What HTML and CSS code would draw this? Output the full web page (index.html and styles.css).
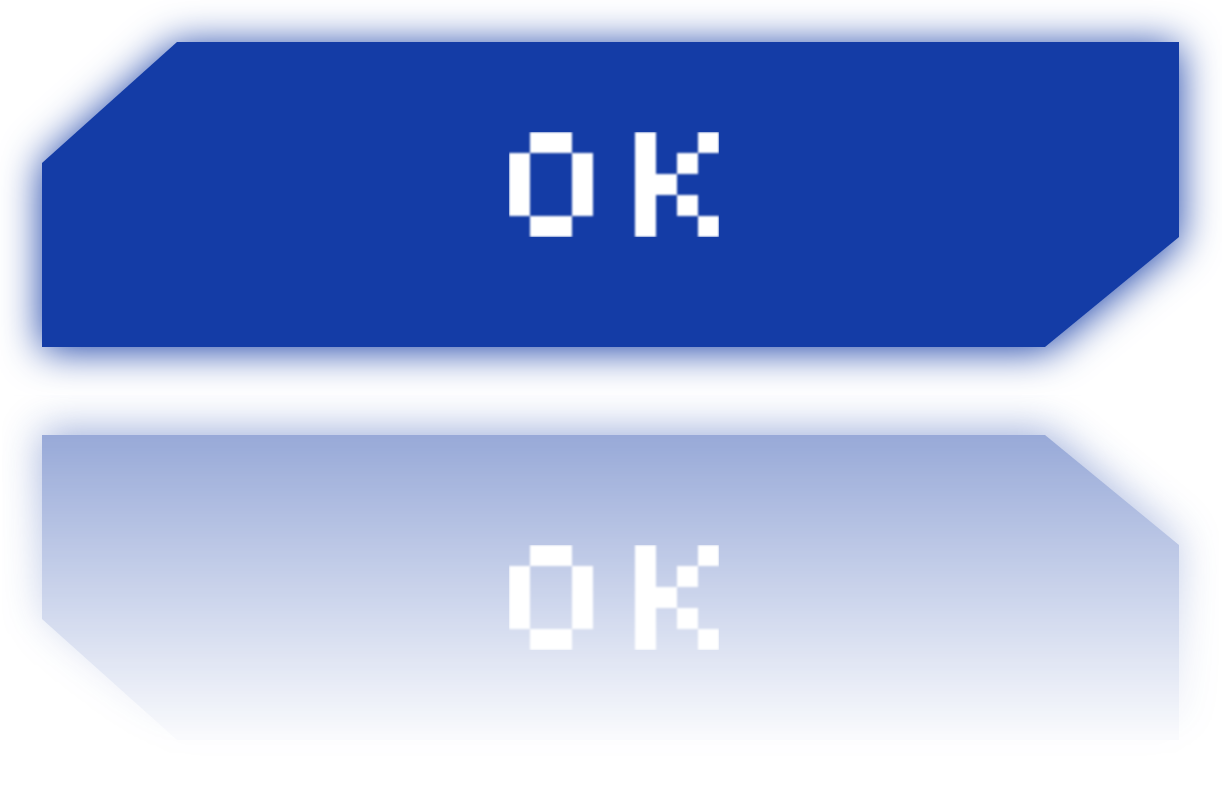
FILE: index.html
```html
<!DOCTYPE html>
<html lang="en">
<head>
<meta charset="utf-8">
<title>OK</title>
<link rel="stylesheet" href="styles.css">
</head>
<body>
<main class="stage">
  <div class="btn-wrap">
    <button class="btn" type="button">
      <svg class="label" width="250" height="190" viewBox="-20 -45 250 190">
        <defs>
          <filter id="pixel" filterUnits="userSpaceOnUse" primitiveUnits="userSpaceOnUse" x="0" y="0" width="210" height="105" color-interpolation-filters="sRGB">
            <feFlood x="10" y="10" width="1" height="1" flood-color="#fff" result="dot"/>
            <feOffset in="dot" x="0" y="0" width="21" height="21" result="cell"/>
            <feTile in="cell" x="0" y="0" width="210" height="105" result="grid"/>
            <feComposite in="SourceGraphic" in2="grid" operator="in" result="sample"/>
            <feMorphology in="sample" operator="dilate" radius="10" result="blocks"/>
            <feGaussianBlur in="blocks" stdDeviation="1.1"/>
          </filter>
        </defs>
        <g class="glyphs" filter="url(#pixel)">
          <text x="-4" y="105" textLength="92" lengthAdjust="spacingAndGlyphs">O</text><text x="118" y="105" textLength="92" lengthAdjust="spacingAndGlyphs">K</text>
        </g>
      </svg>
    </button>
  </div>
  <div class="reflection" aria-hidden="true">
    <div class="btn-wrap">
      <div class="btn">
        <svg class="label" width="250" height="190" viewBox="-20 -45 250 190">
          <g class="glyphs" filter="url(#pixel)">
            <text x="-4" y="105" textLength="92" lengthAdjust="spacingAndGlyphs">O</text><text x="118" y="105" textLength="92" lengthAdjust="spacingAndGlyphs">K</text>
          </g>
        </svg>
      </div>
    </div>
  </div>
</main>
</body>
</html>
```
FILE: styles.css
```css
html, body {
  margin: 0;
  padding: 0;
  background: #ffffff;
  font-family: "Lato", "DejaVu Sans", sans-serif;
  overflow: hidden;
}

.stage {
  padding: 42px 0 0 42px;
}

.btn-wrap {
  width: 1137px;
  height: 305px;
  filter: drop-shadow(0 3px 20px #143ca6);
}

.btn {
  display: flex;
  align-items: center;
  justify-content: center;
  width: 100%;
  height: 100%;
  margin: 0;
  padding: 0;
  border: 0;
  background: #143ca6;
  clip-path: polygon(0 121px, 135px 0, 100% 0, 100% 195px, 1003px 100%, 0 100%);
  cursor: pointer;
}

.label {
  display: block;
  margin: 0 0 25px 7px;
  overflow: visible;
}

.glyphs {
  fill: #ffffff;
  font-family: "Lato", "DejaVu Sans", sans-serif;
  font-weight: 700;
  font-size: 145px;
}

/* mirrored copy under the button, fading out downward */
.reflection {
  width: 1137px;
  margin: 48px 0 0 -40px;
  padding: 40px;
  transform: scaleY(-1);
  -webkit-mask-image: linear-gradient(to bottom, rgba(0, 0, 0, 0) 0px, rgba(0, 0, 0, 0.02) 39px, rgba(0, 0, 0, 0.44) 345px, rgba(0, 0, 0, 0.5) 385px);
  mask-image: linear-gradient(to bottom, rgba(0, 0, 0, 0) 0px, rgba(0, 0, 0, 0.02) 39px, rgba(0, 0, 0, 0.44) 345px, rgba(0, 0, 0, 0.5) 385px);
}
```
